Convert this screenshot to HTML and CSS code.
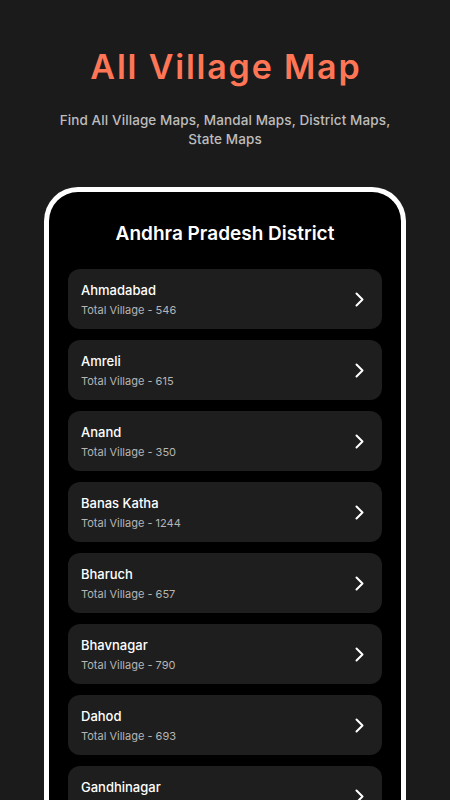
FILE: index.html
```html
<!DOCTYPE html>
<html lang="en">
<head>
<meta charset="utf-8">
<title>All Village Map</title>
<link rel="stylesheet" href="styles.css">
</head>
<body>
<header class="hero">
  <h1 class="hero-title">All Village Map</h1>
  <p class="hero-sub">Find All Village Maps, Mandal Maps, District Maps, State Maps</p>
</header>
<section class="phone">
  <h2 class="phone-title">Andhra Pradesh District</h2>
  <ul class="list">
    <li class="card"><div class="card-text"><span class="name">Ahmadabad</span><span class="count">Total Village - 546</span></div><svg class="chev" width="9" height="15" viewBox="0 0 9 15"><polyline points="1.5,1.5 7.5,7.5 1.5,13.5" fill="none" stroke="#fff" stroke-width="2" stroke-linecap="round" stroke-linejoin="round"/></svg></li>
    <li class="card"><div class="card-text"><span class="name">Amreli</span><span class="count">Total Village - 615</span></div><svg class="chev" width="9" height="15" viewBox="0 0 9 15"><polyline points="1.5,1.5 7.5,7.5 1.5,13.5" fill="none" stroke="#fff" stroke-width="2" stroke-linecap="round" stroke-linejoin="round"/></svg></li>
    <li class="card"><div class="card-text"><span class="name">Anand</span><span class="count">Total Village - 350</span></div><svg class="chev" width="9" height="15" viewBox="0 0 9 15"><polyline points="1.5,1.5 7.5,7.5 1.5,13.5" fill="none" stroke="#fff" stroke-width="2" stroke-linecap="round" stroke-linejoin="round"/></svg></li>
    <li class="card"><div class="card-text"><span class="name">Banas Katha</span><span class="count">Total Village - 1244</span></div><svg class="chev" width="9" height="15" viewBox="0 0 9 15"><polyline points="1.5,1.5 7.5,7.5 1.5,13.5" fill="none" stroke="#fff" stroke-width="2" stroke-linecap="round" stroke-linejoin="round"/></svg></li>
    <li class="card"><div class="card-text"><span class="name">Bharuch</span><span class="count">Total Village - 657</span></div><svg class="chev" width="9" height="15" viewBox="0 0 9 15"><polyline points="1.5,1.5 7.5,7.5 1.5,13.5" fill="none" stroke="#fff" stroke-width="2" stroke-linecap="round" stroke-linejoin="round"/></svg></li>
    <li class="card"><div class="card-text"><span class="name">Bhavnagar</span><span class="count">Total Village - 790</span></div><svg class="chev" width="9" height="15" viewBox="0 0 9 15"><polyline points="1.5,1.5 7.5,7.5 1.5,13.5" fill="none" stroke="#fff" stroke-width="2" stroke-linecap="round" stroke-linejoin="round"/></svg></li>
    <li class="card"><div class="card-text"><span class="name">Dahod</span><span class="count">Total Village - 693</span></div><svg class="chev" width="9" height="15" viewBox="0 0 9 15"><polyline points="1.5,1.5 7.5,7.5 1.5,13.5" fill="none" stroke="#fff" stroke-width="2" stroke-linecap="round" stroke-linejoin="round"/></svg></li>
    <li class="card"><div class="card-text"><span class="name">Gandhinagar</span><span class="count">Total Village - 302</span></div><svg class="chev" width="9" height="15" viewBox="0 0 9 15"><polyline points="1.5,1.5 7.5,7.5 1.5,13.5" fill="none" stroke="#fff" stroke-width="2" stroke-linecap="round" stroke-linejoin="round"/></svg></li>
  </ul>
</section>
</body>
</html>
```
FILE: styles.css
```css
html, body {
  margin: 0;
  padding: 0;
}
body {
  background: #1b1b1b;
  font-family: Inter, "Noto Sans", sans-serif;
  height: 800px;
  overflow: hidden;
  padding-top: 47px;
  box-sizing: border-box;
}
.hero {
  display: flex;
  flex-direction: column;
  align-items: center;
  text-align: center;
}
.hero-title {
  margin: 0;
  font-size: 34px;
  line-height: 40px;
  font-weight: 600;
  color: #ff7657;
  letter-spacing: 1.8px;
  padding-left: 1.8px;
}
.hero-sub {
  margin: 24px 0 0;
  width: 340px;
  font-size: 13.5px;
  line-height: 19px;
  font-weight: 500;
  color: #bdbdbd;
  letter-spacing: 0.1px;
}
.phone {
  margin: 38px 0 0 44px;
  width: 362px;
  box-sizing: border-box;
  border: 5px solid #fff;
  border-bottom: none;
  border-radius: 34px 34px 0 0;
  background: #000;
  padding: 30px 19px 0;
  height: 700px;
}
.phone-title {
  margin: 0;
  text-align: center;
  color: #fff;
  font-size: 19px;
  line-height: 24px;
  font-weight: 600;
}
.list {
  list-style: none;
  margin: 23px 0 0;
  padding: 0;
  display: flex;
  flex-direction: column;
  gap: 11px;
}
.card {
  height: 60px;
  box-sizing: border-box;
  background: #1e1e1e;
  border-radius: 12px;
  padding: 1px 18px 0 13px;
  display: flex;
  align-items: center;
  justify-content: space-between;
}
.card-text {
  display: flex;
  flex-direction: column;
  gap: 5px;
}
.name {
  color: #fff;
  font-size: 13px;
  line-height: 16px;
  font-weight: 500;
}
.count {
  color: #b5b5b5;
  font-size: 11px;
  line-height: 14px;
  font-weight: 400;
}
.chev {
  display: block;
}
```
